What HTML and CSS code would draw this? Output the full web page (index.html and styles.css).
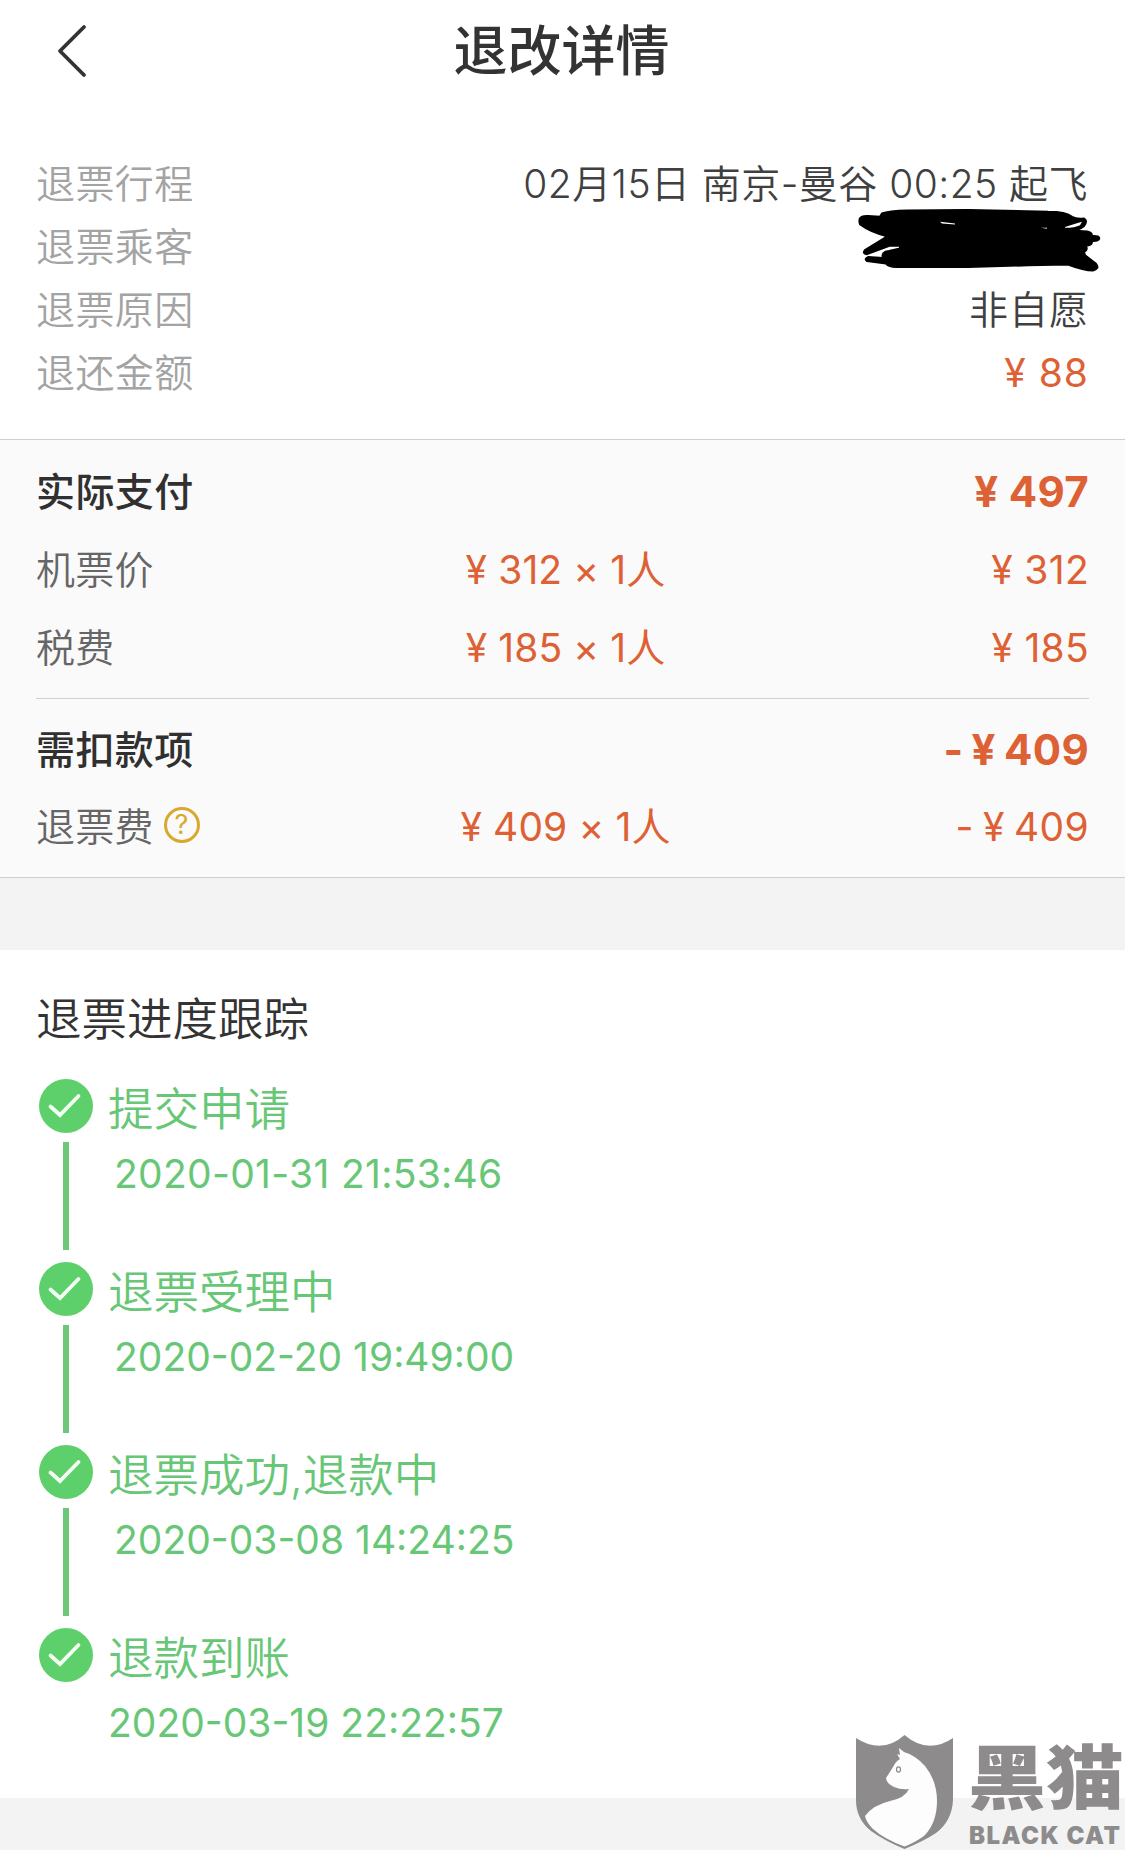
FILE: index.html
```html
<!DOCTYPE html>
<html lang="zh-CN">
<head>
<meta charset="utf-8">
<title>退改详情</title>
<link rel="stylesheet" href="styles.css">
</head>
<body>
<svg class="defs" width="0" height="0" aria-hidden="true">
  <symbol id="check" viewBox="0 0 54 54">
    <circle cx="27" cy="27" r="27" fill="#5dd06b"/>
    <path d="M11.5 27.5 L21 36 L39.5 17" fill="none" stroke="#f4fff4" stroke-width="3.8" stroke-linecap="round" stroke-linejoin="miter"/>
  </symbol>
</svg>
<header class="nav">
  <svg class="back" viewBox="0 0 32 56"><path d="M28 4 L4 28 L28 52" fill="none" stroke="#333" stroke-width="3.8" stroke-linecap="round" stroke-linejoin="round"/></svg>
  <h1 class="title">退改详情</h1>
</header>
<section class="info">
  <div class="info-row"><span class="label">退票行程</span><span class="value trip">02月15日 南京-曼谷 00:25 起飞</span></div>
  <div class="info-row"><span class="label">退票乘客</span>
    <svg class="scribble" viewBox="0 0 244 76" preserveAspectRatio="none">
      <path fill="#000" stroke="#000" stroke-width="2" stroke-linejoin="round" d="M24 5 Q30 2 50 1.500 L110 1 L190 3 Q208 3 214 9 Q218 12 226 11 Q230 14 226 20 Q221 25 214 25 L229 26 Q234 27 234 31 L240 32 Q243 35 239 37 L234 38 Q234 43 228 43 Q230 48 226 50 L227 54 L238 64 Q242 70 235 72 Q226 72 210 65 L170 66 L110 68 L38 68 Q31 68 28 64 L9 61 Q6 58 10 56 L25 57 Q23 50 31 49 L42 46 L42 43 L32 43 L9 53 Q4 52 7 48 L29 32 Q12 27 2 18 Q-1 7 10 8 L22 9 Z"/>
      <path fill="#fff" d="M82 15 L97 17 L97 18 L84 17 Z M207 21 L218 17 L224 15 L222 19 Q217 22 207 22 Z M183 22 L189 22 L189 23 Z"/>
    </svg>
  </div>
  <div class="info-row"><span class="label">退票原因</span><span class="value reason">非自愿</span></div>
  <div class="info-row"><span class="label">退还金额</span><span class="value money">¥ 88</span></div>
</section>
<section class="fees">
  <div class="fee-group paid">
    <div class="fee-row head"><span class="name">实际支付</span><span></span><span class="sum">¥ 497</span></div>
    <div class="fee-row"><span class="name">机票价</span><span class="calc">¥ 312 × 1人</span><span class="sum">¥ 312</span></div>
    <div class="fee-row"><span class="name">税费</span><span class="calc">¥ 185 × 1人</span><span class="sum">¥ 185</span></div>
  </div>
  <div class="fee-group deducted">
    <div class="fee-row head"><span class="name">需扣款项</span><span></span><span class="sum">- ¥ 409</span></div>
    <div class="fee-row"><span class="name">退票费<span class="help">?</span></span><span class="calc">¥ 409 × 1人</span><span class="sum">- ¥ 409</span></div>
  </div>
</section>
<section class="progress">
  <h2 class="progress-title">退票进度跟踪</h2>
  <ol class="steps">
    <li class="step first"><div class="rail"><svg class="dot"><use href="#check"/></svg><i class="line"></i></div><div class="text"><p class="state">提交申请</p><p class="time">2020-01-31 21:53:46</p></div></li>
    <li class="step"><div class="rail"><svg class="dot"><use href="#check"/></svg><i class="line"></i></div><div class="text"><p class="state">退票受理中</p><p class="time">2020-02-20 19:49:00</p></div></li>
    <li class="step"><div class="rail"><svg class="dot"><use href="#check"/></svg><i class="line"></i></div><div class="text"><p class="state">退票成功,退款中</p><p class="time">2020-03-08 14:24:25</p></div></li>
    <li class="step last"><div class="rail"><svg class="dot"><use href="#check"/></svg></div><div class="text"><p class="state">退款到账</p><p class="time">2020-03-19 22:22:57</p></div></li>
  </ol>
</section>
<div class="watermark">
  <svg class="shield" viewBox="0 0 97 114">
    <path fill="#8d8b8b" d="M0 3 Q26 20 48.500 0 Q72 20 97 3 V65 Q96 86 80 98 Q68 106 48.500 114 Q29 106 15 96 Q0 84 0 65 Z"/>
    <path fill="#fdfdfd" d="M43 13 L48 17 Q59 20 69 31 Q81 46 81 66 Q81 88 68 101 Q58 108 48.500 111.500 Q28 104 17 94 Q10 87 9 81 Q17 70 34 66 Q49 63 53 54 Q45 55 38 52 Q30 48 30 43 Q34 37 37 32 Q40 26 44 24 L41 19 L44 20 Z"/>
    <ellipse cx="42.500" cy="34.500" rx="2" ry="2.600" fill="none" stroke="#8d8b8b" stroke-width="1.200"/>
  </svg>
  <div class="brand"><span class="brand-cn">黑猫</span><span class="brand-en">BLACK CAT</span></div>
</div>
</body>
</html>
```
FILE: styles.css
```css
* { box-sizing: border-box; margin: 0; padding: 0; }
body {
  position: relative;
  width: 1125px;
  height: 1850px;
  overflow: hidden;
  background: #f3f3f3;
  color: #333;
  font-family: Inter, "Noto Sans CJK SC", sans-serif;
  font-size: 39px;
  white-space: nowrap;
}
.defs { display: block; }
.nav {
  display: grid;
  grid-template-columns: 200px 1fr 200px;
  align-items: center;
  height: 98px;
  padding-top: 2px;
  background: #fff;
}
.back { width: 32px; height: 56px; margin-left: 56px; }
.title { padding-top: 2px; margin-left: -2px; font-size: 54px; font-weight: 500; line-height: 96px; text-align: center; }
.info { height: 341px; padding: 54px 37px 0 36px; background: #fff; }
.info-row { display: flex; justify-content: space-between; height: 63px; line-height: 63px; }
.label { color: #a3a3a3; font-weight: 350; letter-spacing: .4px; }
.value { color: #404040; font-weight: 350; letter-spacing: .45px; }
.reason { margin-right: -1px; letter-spacing: 1px; }
.scribble { width: 244px; height: 65px; margin: -6px -14px 0 0; overflow: visible; }
.value.money, .calc, .sum { color: #dd6134; font-weight: 380; }
.value.money { margin-right: -1px; letter-spacing: 1px; }
.fees { height: 439px; padding: 0 36px; background: #fafafa; border-top: 1px solid #cfcfcf; border-bottom: 1px solid #cfcfcf; }
.fee-group.paid { height: 259px; padding-top: 13px; border-bottom: 1px solid #d0d0d0; }
.fee-group.deducted { padding-top: 12px; }
.fee-row { display: grid; grid-template-columns: 1fr 300px 1fr; height: 78px; line-height: 78px; }
.deducted .head { height: 77px; }
.name { display: flex; align-items: center; color: #666; font-weight: 350; letter-spacing: .2px; }
.deducted .name { padding-bottom: 2px; }
.calc { text-align: center; padding-left: 6px; font-feature-settings: "calt" 0; letter-spacing: .1px; }
.sum { text-align: right; letter-spacing: .3px; font-feature-settings: "calt" 0; }
.deducted .sum { word-spacing: -2px; }
.head .name { color: #303030; font-weight: 500; letter-spacing: .4px; }
.head .sum { font-size: 42px; font-weight: 700; }
.help {
  width: 36px;
  height: 36px;
  margin: -4px 0 0 10px;
  border: 3px solid #d9a92f;
  border-radius: 50%;
  color: #d9a92f;
  font-size: 27px;
  font-weight: 400;
  line-height: 30px;
  text-align: center;
}
.progress { height: 848px; margin-top: 72px; padding: 36px 39px 0; background: #fff; }
.progress-title { height: 68px; margin-left: -3px; font-size: 45.500px; font-weight: 350; line-height: 68px; }
.steps { padding-top: 25px; list-style: none; }
.step { display: flex; gap: 15px; height: 183px; color: #67c776; }
.rail { display: flex; flex-direction: column; align-items: center; gap: 9px; width: 54px; }
.dot { display: block; width: 54px; height: 54px; }
.line { width: 6px; height: 108px; background: #6cc878; }
.state { height: 61px; padding-top: 1px; font-size: 45.500px; font-weight: 350; line-height: 60px; }
.time { margin-left: 6px; height: 68px; line-height: 68px; font-weight: 380; }
.first .time { letter-spacing: .3px; }
.last .time { margin-left: 0; }
.watermark { position: absolute; left: 856px; top: 1735px; display: flex; gap: 15px; }
.shield { width: 97px; height: 114px; }
.brand { display: flex; flex-direction: column; color: #8d8b8b; }
.brand-cn { height: 88px; font-size: 78px; font-weight: 900; line-height: 88px; transform: scaleY(.9); }
.brand-en { height: 26px; margin-left: 1px; font-size: 24px; font-weight: 900; line-height: 25px; letter-spacing: 1.500px; }
```
